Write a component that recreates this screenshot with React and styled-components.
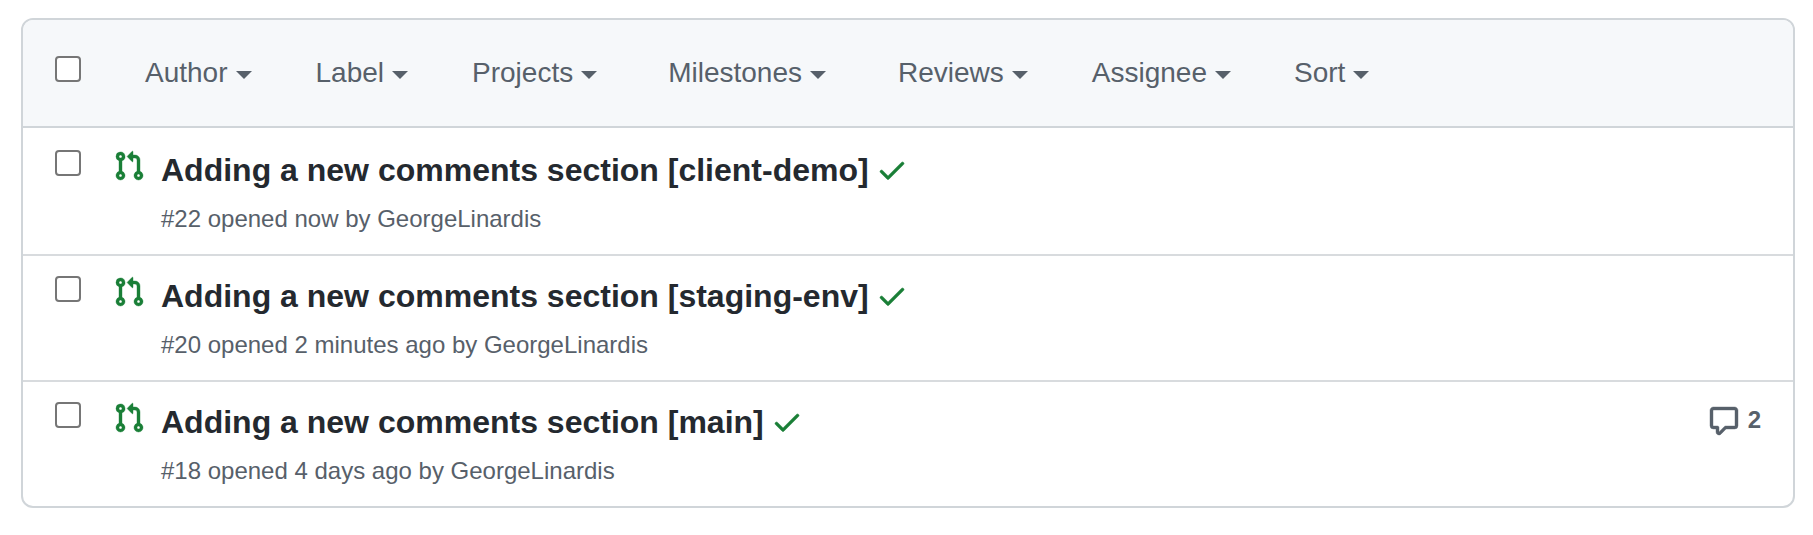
import React from 'react'
import styled, { createGlobalStyle } from 'styled-components'

const GlobalStyle = createGlobalStyle`
  html, body { margin: 0; padding: 0; background: #fff; }
  body { font-family: "Liberation Sans", Arial, sans-serif; }
`

const Page = styled.div`
  padding: 18px 18px 27px 21px;
`

const Box = styled.div`
  border: 2px solid #d0d5d9;
  border-radius: 12px;
  overflow: hidden;
  background: #fff;
`

const Header = styled.div`
  height: 106px;
  display: flex;
  align-items: flex-start;
  background: #f6f8fa;
  border-bottom: 2px solid #d0d5d9;
  padding-left: 32px;
`

const Checkbox = styled.span`
  flex: none;
  box-sizing: border-box;
  display: block;
  width: 26px;
  height: 26px;
  border: 2px solid #767676;
  border-radius: 4px;
  background: #fff;
  margin-top: ${(p) => p.$top}px;
`

const Filters = styled.div`
  display: flex;
  margin-left: 64px;
  margin-top: 37px;
`

const Filter = styled.div`
  display: flex;
  align-items: center;
  height: 32px;
  font-size: 28px;
  line-height: 32px;
  color: #57606a;
  margin-right: ${(p) => p.$gap}px;
`

const Caret = styled.span`
  width: 0;
  height: 0;
  margin-left: 8px;
  margin-top: 3px;
  border-top: 8px solid #57606a;
  border-left: 8px solid transparent;
  border-right: 8px solid transparent;
`

const Row = styled.div`
  height: 124px;
  display: flex;
  align-items: flex-start;
  padding-left: 32px;
  padding-top: ${(p) => (p.$first ? 2 : 0)}px;
  border-bottom: ${(p) => (p.$last ? 'none' : '2px solid #d8dbde')};
`

const PrIcon = styled.svg`
  flex: none;
  width: 32px;
  height: 32px;
  margin-left: 32px;
  margin-top: 20px;
  fill: #1a7f37;
  stroke: #1a7f37;
  stroke-width: 0.2;
`

const Main = styled.div`
  margin-left: 16px;
  flex: 1;
  min-width: 0;
`

const TitleLine = styled.div`
  display: flex;
  align-items: flex-start;
  margin-top: 20px;
  height: 40px;
`

const Title = styled.span`
  font-size: 32px;
  line-height: 40px;
  font-weight: 700;
  color: #24292f;
`

const Check = styled.svg`
  flex: none;
  width: 32px;
  height: 32px;
  margin-left: 7.5px;
  margin-top: 4px;
  fill: #1a7f37;
  stroke: #1a7f37;
  stroke-width: 0.25;
`

const Meta = styled.div`
  margin-top: 13px;
  font-size: 24px;
  line-height: 32px;
  color: #57606a;
`

const Comments = styled.div`
  flex: none;
  display: flex;
  align-items: flex-start;
  margin-top: 23px;
  margin-right: 32px;
  font-size: 24px;
  line-height: 30px;
  font-weight: 700;
  color: #57606a;
`

const CommentIcon = styled.svg`
  width: 32px;
  height: 32px;
  margin-right: 8px;
  fill: #57606a;
  stroke: #57606a;
  stroke-width: 0.2;
`

const PR_PATH = 'M1.5 3.25a2.25 2.25 0 1 1 3 2.122v5.256a2.251 2.251 0 1 1-1.5 0V5.372A2.25 2.25 0 0 1 1.5 3.25Zm5.677-.177L9.573.677A.25.25 0 0 1 10 .854V2.5h1A2.5 2.5 0 0 1 13.5 5v5.628a2.251 2.251 0 1 1-1.5 0V5a1 1 0 0 0-1-1h-1v1.646a.25.25 0 0 1-.427.177L7.177 3.427a.25.25 0 0 1 0-.354ZM3.75 2.5a.75.75 0 1 0 0 1.5.75.75 0 0 0 0-1.5Zm0 9.5a.75.75 0 1 0 0 1.5.75.75 0 0 0 0-1.5Zm8.25.75a.75.75 0 1 0 1.5 0 .75.75 0 0 0-1.5 0Z'
const CHECK_PATH = 'M13.78 4.22a.75.75 0 0 1 0 1.06l-7.25 7.25a.75.75 0 0 1-1.06 0L2.22 9.28a.751.751 0 0 1 .018-1.042.751.751 0 0 1 1.042-.018L6 10.94l6.72-6.72a.75.75 0 0 1 1.06 0Z'
const COMMENT_PATH = 'M1 2.75C1 1.784 1.784 1 2.75 1h10.5c.966 0 1.75.784 1.75 1.75v7.5A1.75 1.75 0 0 1 13.25 12H9.06l-2.573 2.573A1.458 1.458 0 0 1 4 13.543V12H2.75A1.75 1.75 0 0 1 1 10.25Zm1.75-.25a.25.25 0 0 0-.25.25v7.5c0 .138.112.25.25.25h2a.75.75 0 0 1 .75.75v2.19l2.72-2.72a.749.749 0 0 1 .53-.22h4.5a.25.25 0 0 0 .25-.25v-7.5a.25.25 0 0 0-.25-.25Z'

const filters = [
  { name: 'Author', gap: 64 },
  { name: 'Label', gap: 64 },
  { name: 'Projects', gap: 71 },
  { name: 'Milestones', gap: 72 },
  { name: 'Reviews', gap: 64 },
  { name: 'Assignee', gap: 63 },
  { name: 'Sort', gap: 0 },
]

const pulls = [
  { title: 'Adding a new comments section [client-demo]', meta: '#22 opened now by GeorgeLinardis' },
  { title: 'Adding a new comments section [staging-env]', meta: '#20 opened 2 minutes ago by GeorgeLinardis' },
  { title: 'Adding a new comments section [main]', meta: '#18 opened 4 days ago by GeorgeLinardis', comments: 2 },
]

function App() {
  return (
    <Page>
      <GlobalStyle />
      <Box>
        <Header>
          <Checkbox $top={36} />
          <Filters>
            {filters.map((f) => (
              <Filter key={f.name} $gap={f.gap}>
                {f.name}
                <Caret />
              </Filter>
            ))}
          </Filters>
        </Header>
        {pulls.map((pr, i) => (
          <Row key={pr.meta} $first={i === 0} $last={i === pulls.length - 1}>
            <Checkbox $top={20} />
            <PrIcon viewBox="0 0 16 16"><path d={PR_PATH} /></PrIcon>
            <Main>
              <TitleLine>
                <Title>{pr.title}</Title>
                <Check viewBox="0 0 16 16"><path d={CHECK_PATH} /></Check>
              </TitleLine>
              <Meta>{pr.meta}</Meta>
            </Main>
            {pr.comments && (
              <Comments>
                <CommentIcon viewBox="0 0 16 16"><path d={COMMENT_PATH} /></CommentIcon>
                {pr.comments}
              </Comments>
            )}
          </Row>
        ))}
      </Box>
    </Page>
  )
}

export default App
